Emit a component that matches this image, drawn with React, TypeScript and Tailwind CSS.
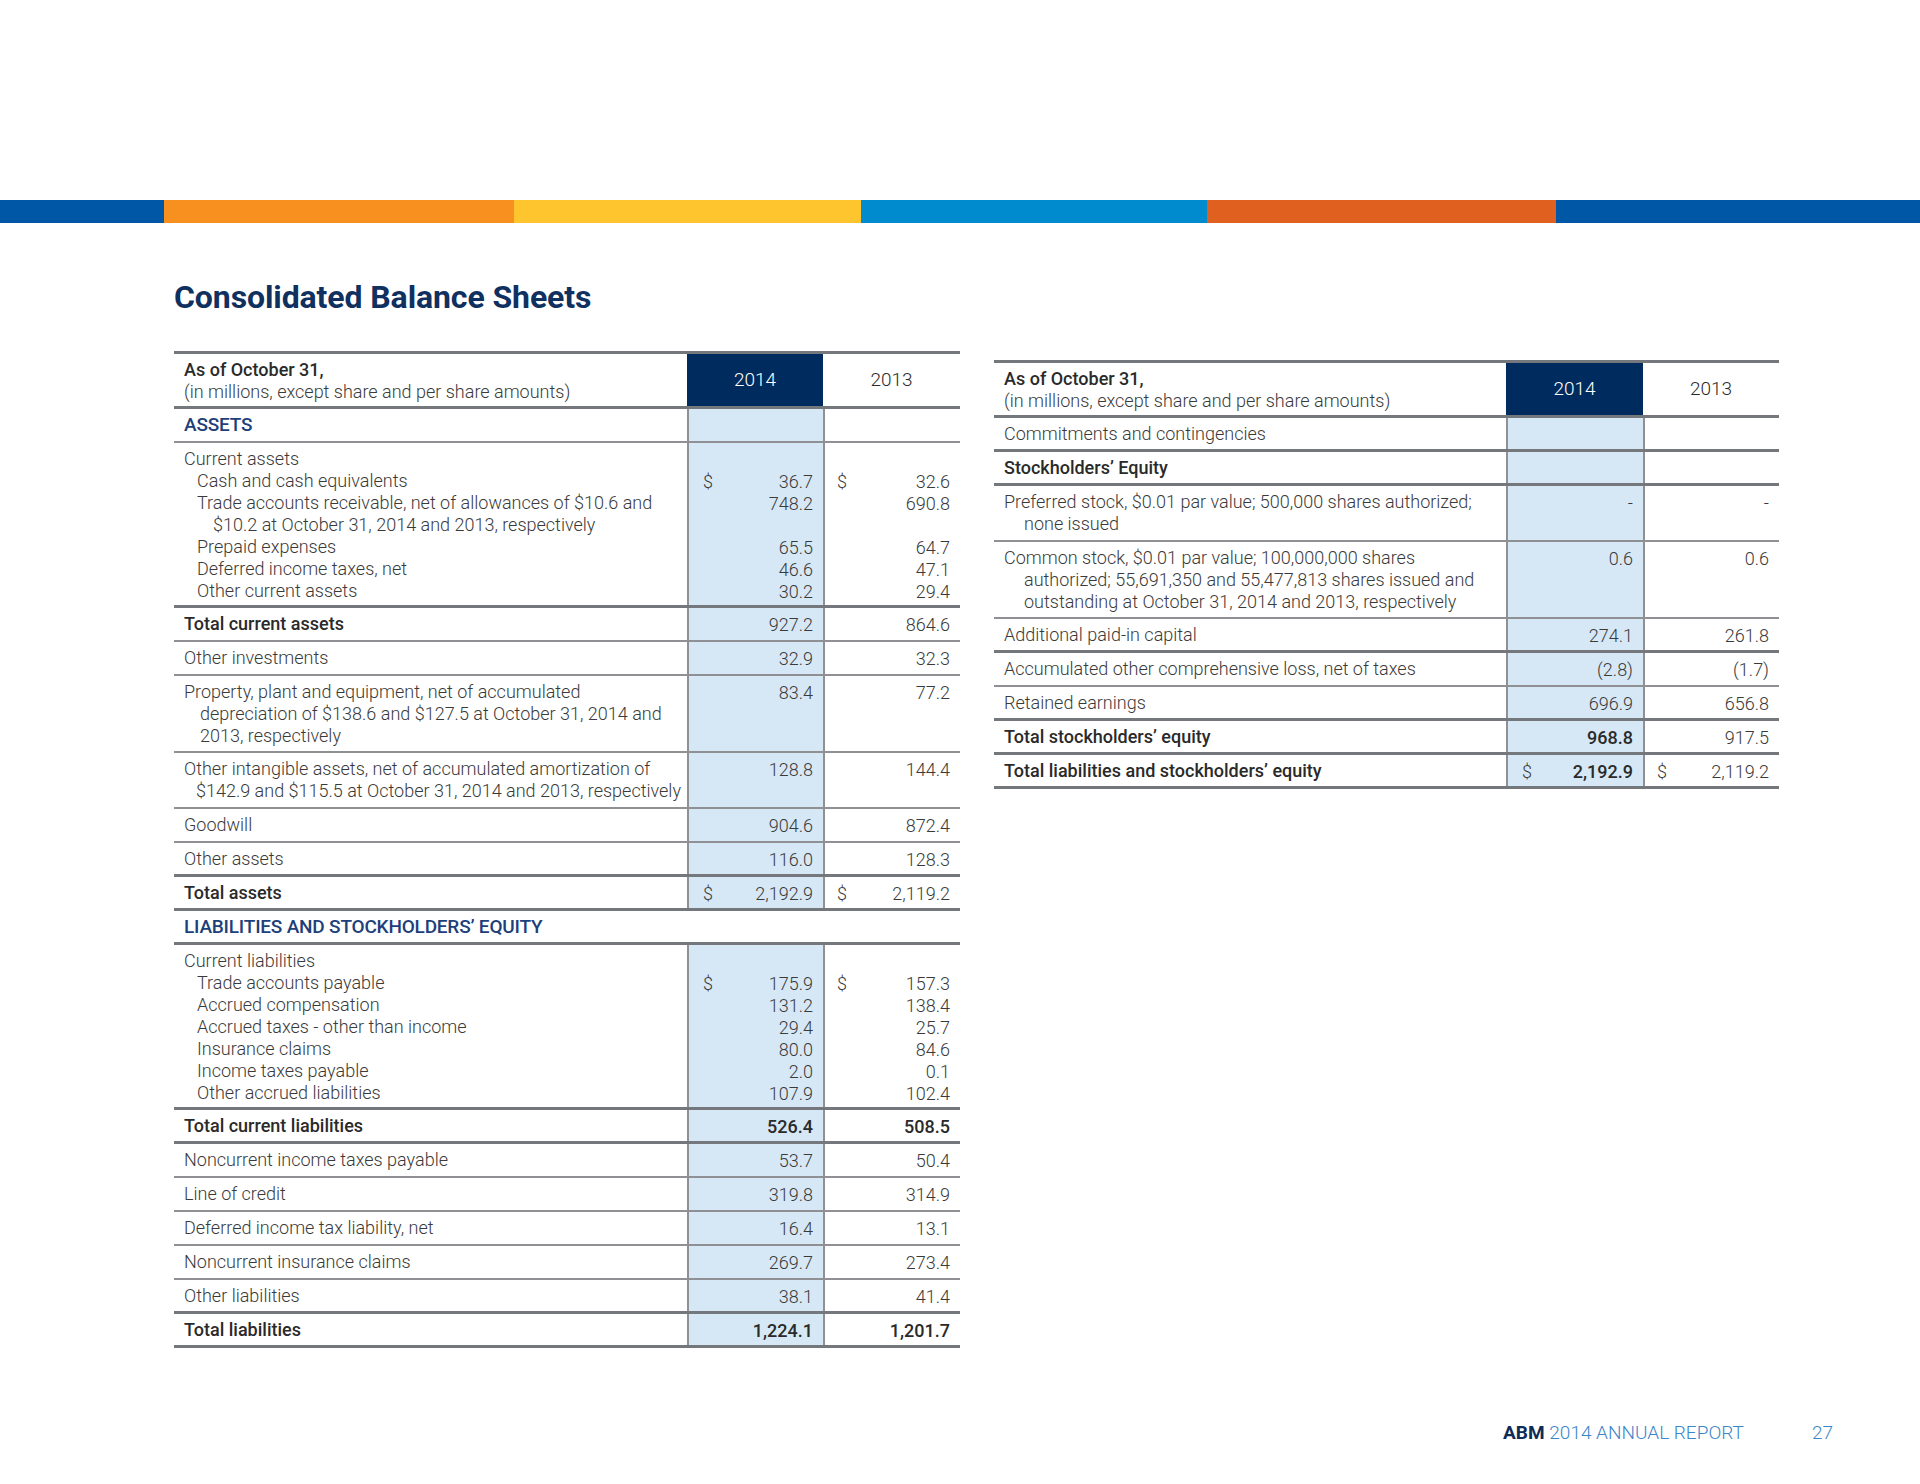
import { FC } from "react";

type Line = { t: string; c?: string };
type Item = {
  lines: Line[];
  a?: string;
  b?: string;
  d?: boolean;
  lb?: boolean;
  ab?: boolean;
  bb?: boolean;
};
type Row = {
  items?: Item[];
  section?: string;
  full?: boolean;
  thick?: boolean;
  pad?: string;
};

const left: Row[] = [
  { section: "ASSETS" },
  {
    thick: true,
    pad: "pt-[5px] pb-[3px]",
    items: [
      { lines: [{ t: "Current assets" }] },
      { lines: [{ t: "Cash and cash equivalents", c: "pl-[13px]" }], a: "36.7", b: "32.6", d: true },
      {
        lines: [
          { t: "Trade accounts receivable, net of allowances of $10.6 and", c: "pl-[13px]" },
          { t: "$10.2 at October 31, 2014 and 2013,  respectively", c: "pl-[29px]" },
        ],
        a: "748.2",
        b: "690.8",
      },
      { lines: [{ t: "Prepaid expenses", c: "pl-[13px]" }], a: "65.5", b: "64.7" },
      { lines: [{ t: "Deferred income taxes, net", c: "pl-[13px]" }], a: "46.6", b: "47.1" },
      { lines: [{ t: "Other current assets", c: "pl-[13px]" }], a: "30.2", b: "29.4" },
    ],
  },
  { items: [{ lines: [{ t: "Total current assets" }], a: "927.2", b: "864.6", lb: true }] },
  { items: [{ lines: [{ t: "Other investments" }], a: "32.9", b: "32.3" }] },
  {
    pad: "pt-[5px] pb-[4px]",
    items: [
      {
        lines: [
          { t: "Property, plant and equipment, net of accumulated" },
          { t: "depreciation of $138.6 and $127.5 at October 31, 2014 and", c: "pl-[16px]" },
          { t: "2013, respectively", c: "pl-[16px]" },
        ],
        a: "83.4",
        b: "77.2",
      },
    ],
  },
  {
    items: [
      {
        lines: [
          { t: "Other intangible assets, net of accumulated amortization of" },
          { t: "$142.9 and $115.5 at October 31, 2014 and 2013, respectively", c: "pl-[12px]" },
        ],
        a: "128.8",
        b: "144.4",
      },
    ],
  },
  { items: [{ lines: [{ t: "Goodwill" }], a: "904.6", b: "872.4" }] },
  { thick: true, items: [{ lines: [{ t: "Other assets" }], a: "116.0", b: "128.3" }] },
  { thick: true, items: [{ lines: [{ t: "Total assets" }], a: "2,192.9", b: "2,119.2", d: true, lb: true }] },
  { section: "LIABILITIES AND STOCKHOLDERS’ EQUITY", full: true, thick: true },
  {
    thick: true,
    pad: "pt-[5px] pb-[3px]",
    items: [
      { lines: [{ t: "Current liabilities" }] },
      { lines: [{ t: "Trade accounts payable", c: "pl-[13px]" }], a: "175.9", b: "157.3", d: true },
      { lines: [{ t: "Accrued compensation", c: "pl-[13px]" }], a: "131.2", b: "138.4" },
      { lines: [{ t: "Accrued taxes - other than income", c: "pl-[13px]" }], a: "29.4", b: "25.7" },
      { lines: [{ t: "Insurance claims", c: "pl-[13px]" }], a: "80.0", b: "84.6" },
      { lines: [{ t: "Income taxes payable", c: "pl-[13px]" }], a: "2.0", b: "0.1" },
      { lines: [{ t: "Other accrued liabilities", c: "pl-[13px]" }], a: "107.9", b: "102.4" },
    ],
  },
  {
    thick: true,
    items: [{ lines: [{ t: "Total current liabilities" }], a: "526.4", b: "508.5", lb: true, ab: true, bb: true }],
  },
  { items: [{ lines: [{ t: "Noncurrent income taxes payable" }], a: "53.7", b: "50.4" }] },
  { items: [{ lines: [{ t: "Line of credit" }], a: "319.8", b: "314.9" }] },
  { items: [{ lines: [{ t: "Deferred income tax liability, net" }], a: "16.4", b: "13.1" }] },
  { items: [{ lines: [{ t: "Noncurrent insurance claims" }], a: "269.7", b: "273.4" }] },
  { thick: true, items: [{ lines: [{ t: "Other liabilities" }], a: "38.1", b: "41.4" }] },
  {
    thick: true,
    items: [{ lines: [{ t: "Total liabilities" }], a: "1,224.1", b: "1,201.7", lb: true, ab: true, bb: true }],
  },
];

const right: Row[] = [
  { thick: true, items: [{ lines: [{ t: "Commitments and contingencies" }] }] },
  { thick: true, items: [{ lines: [{ t: "Stockholders’ Equity" }], lb: true }] },
  {
    items: [
      {
        lines: [
          { t: "Preferred stock, $0.01 par value; 500,000 shares authorized;" },
          { t: "none issued", c: "pl-[20px]" },
        ],
        a: "-",
        b: "-",
      },
    ],
  },
  {
    pad: "pt-[5px] pb-[4px]",
    items: [
      {
        lines: [
          { t: "Common stock, $0.01 par value; 100,000,000 shares" },
          { t: "authorized; 55,691,350 and 55,477,813 shares issued and", c: "pl-[20px]" },
          { t: "outstanding at October 31, 2014  and 2013, respectively", c: "pl-[20px]" },
        ],
        a: "0.6",
        b: "0.6",
      },
    ],
  },
  { thick: true, items: [{ lines: [{ t: "Additional paid-in capital" }], a: "274.1", b: "261.8" }] },
  { items: [{ lines: [{ t: "Accumulated other comprehensive loss, net of taxes" }], a: "(2.8)", b: "(1.7)" }] },
  { thick: true, items: [{ lines: [{ t: "Retained earnings" }], a: "696.9", b: "656.8" }] },
  {
    thick: true,
    items: [{ lines: [{ t: "Total stockholders’ equity" }], a: "968.8", b: "917.5", lb: true, ab: true }],
  },
  {
    thick: true,
    items: [
      {
        lines: [{ t: "Total liabilities and stockholders’ equity" }],
        a: "2,192.9",
        b: "2,119.2",
        d: true,
        lb: true,
        ab: true,
      },
    ],
  },
];

const ValueCol: FC<{ items: Item[]; which: "a" | "b" }> = ({ items, which }) => (
  <>
    {items.map((it, i) => {
      const v = which === "a" ? it.a : it.b;
      const bold = which === "a" ? it.ab : it.bb;
      return (
        <div key={i}>
          <div className="flex h-[22px] items-center justify-between text-[18px]">
            <span className="font-light">{v && it.d ? "$" : ""}</span>
            <span className={bold ? "font-medium text-[#2a2a2a]" : "font-light"}>{v ?? ""}</span>
          </div>
          {it.lines.slice(1).map((_, j) => (
            <div key={j} className="h-[22px]" />
          ))}
        </div>
      );
    })}
  </>
);

const TableRow: FC<{ r: Row; cols: string }> = ({ r, cols }) => {
  const border = r.thick ? "border-b-[3px] border-[#74777b]" : "border-b-2 border-[#8e9093]";
  const pad = r.pad ?? (r.thick ? "pt-[5px] pb-[4px]" : "py-[5px]");
  const sectionText = "text-[19px] font-medium tracking-[-0.2px] text-[#1d3f7a]";
  if (r.section) {
    if (r.full) {
      return (
        <div className={`${border} ${pad} pl-[10px] leading-[22px]`}>
          <span className={sectionText}>{r.section}</span>
        </div>
      );
    }
    return (
      <div className={`grid ${cols} ${border}`}>
        <div className={`${pad} pl-[10px] leading-[22px]`}>
          <span className={sectionText}>{r.section}</span>
        </div>
        <div className="border-l-2 border-[#8e9093] bg-[#d6e8f6]" />
        <div className="border-l-2 border-[#8e9093]" />
      </div>
    );
  }
  const items = r.items ?? [];
  return (
    <div className={`grid ${cols} ${border}`}>
      <div className={`${pad} pl-[10px] leading-[22px]`}>
        {items.map((it, i) =>
          it.lines.map((l, j) => (
            <div
              key={`${i}-${j}`}
              className={`h-[22px] whitespace-nowrap ${l.c ?? ""} ${
                it.lb ? "font-medium text-[#2a2a2a]" : "font-light"
              }`}
            >
              {l.t}
            </div>
          ))
        )}
      </div>
      <div className={`${pad} border-l-2 border-[#8e9093] bg-[#d6e8f6] pl-[14px] pr-[10px]`}>
        <ValueCol items={items} which="a" />
      </div>
      <div className={`${pad} border-l-2 border-[#8e9093] pl-[12px] pr-[10px]`}>
        <ValueCol items={items} which="b" />
      </div>
    </div>
  );
};

const Table: FC<{ rows: Row[]; cols: string; width: string }> = ({ rows, cols, width }) => (
  <div className={`${width} text-[18px] text-[#3a3a3a]`}>
    <div className={`grid ${cols} border-y-[3px] border-[#74777b]`}>
      <div className="pb-[3px] pl-[10px] pt-[5px] leading-[22px]">
        <div className="font-medium text-[#2a2a2a]">As of October 31,</div>
        <div className="font-light">(in millions, except share and per share amounts)</div>
      </div>
      <div className="flex items-center justify-center bg-[#002b5e] text-[19px] font-light text-white">2014</div>
      <div className="flex items-center justify-center text-[19px] font-light text-[#2a2a2a]">2013</div>
    </div>
    {rows.map((r, i) => (
      <TableRow key={i} r={r} cols={cols} />
    ))}
  </div>
);

export default function App() {
  return (
    <div className="flex h-[1484px] w-[1920px] flex-col bg-white font-['Roboto','Liberation_Sans',sans-serif]">
      <div className="mt-[200px] flex h-[23px]">
        <div className="w-[164px] bg-[#0057a6]" />
        <div className="w-[350px] bg-[#f7901e]" />
        <div className="w-[347px] bg-[#ffc52f]" />
        <div className="w-[346px] bg-[#008bcf]" />
        <div className="w-[349px] bg-[#e0601f]" />
        <div className="flex-1 bg-[#0057a6]" />
      </div>

      <div className="pl-[174px]">
        <h1 className="mt-[55px] text-[32px] font-bold leading-[38px] tracking-[-0.1px] text-[#10305f]">
          Consolidated Balance Sheets
        </h1>
        <div className="mt-[35px] flex items-start gap-[34px]">
          <Table rows={left} cols="grid-cols-[513px_136px_137px]" width="w-[786px]" />
          <div className="mt-[9px]">
            <Table rows={right} cols="grid-cols-[512px_137px_136px]" width="w-[785px]" />
          </div>
        </div>
      </div>

      <div className="mt-auto flex items-center justify-end gap-[68px] pb-[39px] pr-[87px] text-[19px] leading-[24px]">
        <div>
          <span className="font-bold text-[#0f2b57]">ABM</span>{" "}
          <span className="font-light text-[#3b86c9]">2014 ANNUAL REPORT</span>
        </div>
        <span className="font-light text-[#3b86c9]">27</span>
      </div>
    </div>
  );
}
